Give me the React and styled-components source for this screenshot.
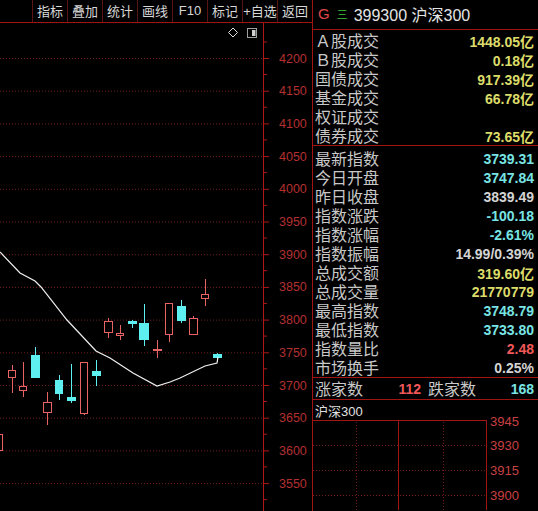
import React from 'react'
import styled, { createGlobalStyle } from 'styled-components'

const GlobalStyle = createGlobalStyle`
    html, body {
        margin: 0;
        padding: 0;
        background: #000;
    }
    * {
        box-sizing: border-box;
    }
`

const FONT = '"Liberation Sans", "Noto Sans CJK SC", sans-serif'
const RED_LINE = '#a01414'

const tools = ['指标', '叠加', '统计', '画线', 'F10', '标记', '+自选', '返回']

const volumeRows = [
    { label: 'Ａ股成交', value: '1448.05亿', tone: 'yellow' },
    { label: 'Ｂ股成交', value: '0.18亿', tone: 'yellow' },
    { label: '国债成交', value: '917.39亿', tone: 'yellow' },
    { label: '基金成交', value: '66.78亿', tone: 'yellow' },
    { label: '权证成交', value: '', tone: 'yellow' },
    { label: '债券成交', value: '73.65亿', tone: 'yellow' },
]

const indexRows = [
    { label: '最新指数', value: '3739.31', tone: 'cyan' },
    { label: '今日开盘', value: '3747.84', tone: 'cyan' },
    { label: '昨日收盘', value: '3839.49', tone: 'white' },
    { label: '指数涨跌', value: '-100.18', tone: 'cyan' },
    { label: '指数涨幅', value: '-2.61%', tone: 'cyan' },
    { label: '指数振幅', value: '14.99/0.39%', tone: 'white' },
    { label: '总成交额', value: '319.60亿', tone: 'yellow' },
    { label: '总成交量', value: '21770779', tone: 'yellow' },
    { label: '最高指数', value: '3748.79', tone: 'cyan' },
    { label: '最低指数', value: '3733.80', tone: 'cyan' },
    { label: '指数量比', value: '2.48', tone: 'red' },
    { label: '市场换手', value: '0.25%', tone: 'white' },
]

const tones = {
    yellow: '#dcdc6a',
    cyan: '#78e4e4',
    white: '#d4d4d4',
    red: '#f05858',
}

// x, width, body top, body bottom, wick top, wick bottom, up (red) / down (cyan), filled
const candles = [
    [-5, 8, 434, 451, 430, 455, true],
    [8, 8, 370, 378, 365, 393, true],
    [19, 8, 386, 391, 362, 397, true],
    [31, 9, 355, 378, 347, 378, false],
    [43, 9, 402, 413, 392, 425, true],
    [55, 8, 380, 394, 375, 400, false],
    [67, 9, 397, 401, 364, 403, false],
    [80, 8, 362, 414, 362, 415, true],
    [92, 9, 371, 376, 360, 386, false],
    [104, 9, 321, 333, 318, 338, true],
    [116, 8, 333, 336, 325, 340, true],
    [128, 9, 321, 324, 320, 328, false],
    [139, 10, 323, 340, 304, 346, false],
    [153, 9, 349, 351, 340, 358, true, true],
    [165, 8, 303, 335, 303, 342, true],
    [177, 9, 306, 321, 300, 323, false],
    [189, 9, 318, 335, 316, 335, true],
    [201, 8, 294, 299, 279, 306, true],
    [213, 9, 354, 358, 353, 362, false],
]

const maLine = '0,252 20,273 35,281 41,287 67,320 96,351 110,358 133,373 157,386 170,382 180,378 205,366 217,363 218,357'

const priceLevels = [4200, 4150, 4100, 4050, 4000, 3950, 3900, 3850, 3800, 3750, 3700, 3650, 3600, 3550]
const levelY = (i) => 58 + i * 32.7

function Candle({ c }) {
    const [x, w, bt, bb, wt, wb, up, filled] = c
    const mid = x + Math.floor(w / 2)
    const color = up ? '#e86464' : '#5ef0f0'
    return (
        <g>
            <line x1={mid + 0.5} x2={mid + 0.5} y1={wt} y2={bt} stroke={color} />
            <line x1={mid + 0.5} x2={mid + 0.5} y1={bb} y2={wb} stroke={color} />
            {up && !filled ? (
                <rect x={x + 0.5} y={bt + 0.5} width={w - 1} height={Math.max(bb - bt - 1, 1)} fill="#000" stroke={color} />
            ) : (
                <rect x={x} y={bt} width={w} height={Math.max(bb - bt, 2)} fill={color} />
            )}
        </g>
    )
}

function KChart() {
    return (
        <ChartSvg viewBox="0 23 312 488" width="312" height="488">
            {priceLevels.map((p, i) => (
                <line key={p} x1="0" x2="262" y1={levelY(i) + 0.5} y2={levelY(i) + 0.5}
                    stroke="#6e1c1c" strokeDasharray="1 2" />
            ))}
            <line x1="263.5" x2="263.5" y1="23" y2="511" stroke="#b01818" />
            {priceLevels.map((p, i) => (
                <g key={'t' + p}>
                    <line x1="264" x2="269" y1={levelY(i) + 0.5} y2={levelY(i) + 0.5} stroke="#b01818" />
                    <line x1="264" x2="267" y1={levelY(i) + 16.5} y2={levelY(i) + 16.5} stroke="#b01818" />
                    <text x="279" y={levelY(i) + 4.5} fill="#b43030" fontSize="12.5" fontFamily={FONT}>{p}</text>
                </g>
            ))}
            <line x1="264" x2="267" y1={levelY(0) - 16} y2={levelY(0) - 16} stroke="#b01818" />

            {candles.map((c, i) => <Candle key={i} c={c} />)}
            <polyline points={maLine} fill="none" stroke="#f0f0f0" strokeWidth="1.2" />

            {/* small toggle icons over the chart */}
            <path d="M233 28 L237.5 32.5 L233 37 L228.5 32.5 Z" fill="none" stroke="#e0e0e0" />
            <rect x="247.5" y="28.5" width="9" height="9" fill="none" stroke="#a0a0a0" />
            <rect x="252" y="30" width="3.5" height="6" fill="#d0d0d0" />
        </ChartSvg>
    )
}

function MiniChart() {
    const ys = [446, 471, 496]
    const labels = [[3945, 422], [3930, 446], [3915, 471], [3900, 496]]
    return (
        <MiniSvg viewBox="313 414 225 97" width="225" height="97">
            <line x1="313" x2="487" y1="421.5" y2="421.5" stroke={RED_LINE} />
            <line x1="487.5" x2="487.5" y1="421" y2="511" stroke={RED_LINE} />
            <line x1="399.5" x2="399.5" y1="421" y2="511" stroke={RED_LINE} />
            {ys.map((y) => (
                <line key={y} x1="314" x2="487" y1={y + 0.5} y2={y + 0.5} stroke="#6e1c1c" strokeDasharray="1 2" />
            ))}
            {[357, 444].map((x) => (
                <line key={x} x1={x + 0.5} x2={x + 0.5} y1="423" y2="511" stroke="#6e1c1c" strokeDasharray="1 2" />
            ))}
            {labels.map(([p, y]) => (
                <text key={p} x="491" y={y + 5} fill="#c84040" fontSize="13" fontFamily={FONT}>{p}</text>
            ))}
        </MiniSvg>
    )
}

export default function App() {
    return (
        <>
            <GlobalStyle />
            <Screen>
                <LeftPane>
                    <Toolbar>
                        {tools.map((t) => <Tool key={t}>{t}</Tool>)}
                    </Toolbar>
                    <KChart />
                </LeftPane>
                <InfoPane>
                    <Header>
                        <Mark>G</Mark>
                        <Menu>三</Menu>
                        <Title>399300 沪深300</Title>
                    </Header>
                    <Group $top={1}>
                        {volumeRows.map((r) => (
                            <Row key={r.label}>
                                <Label>{r.label}</Label>
                                <Value $tone={r.tone}>{r.value}</Value>
                            </Row>
                        ))}
                    </Group>
                    <Group $top={3}>
                        {indexRows.map((r) => (
                            <Row key={r.label}>
                                <Label>{r.label}</Label>
                                <Value $tone={r.tone}>{r.value}</Value>
                            </Row>
                        ))}
                    </Group>
                    <Counts>
                        <Label>涨家数</Label>
                        <Value $tone="red">112</Value>
                        <Label $gap>跌家数</Label>
                        <Value $tone="cyan">168</Value>
                    </Counts>
                    <MiniTitle>沪深300</MiniTitle>
                    <MiniChart />
                </InfoPane>
            </Screen>
        </>
    )
}

const Screen = styled.div`
    width: 538px;
    height: 511px;
    background: #000;
    display: flex;
    overflow: hidden;
    font-family: ${FONT};
`
const LeftPane = styled.div`
    width: 312px;
    display: flex;
    flex-direction: column;
`
const Toolbar = styled.div`
    height: 23px;
    display: flex;
    padding-left: 32px;
    border-bottom: 1px solid ${RED_LINE};
`
const Tool = styled.div`
    flex: 1;
    display: flex;
    align-items: center;
    justify-content: center;
    border-left: 1px solid #5a1414;
    color: #d8d8d8;
    font-size: 13px;
    padding-bottom: 1px;
`
const ChartSvg = styled.svg`
    display: block;
`
const InfoPane = styled.div`
    flex: 1;
    display: flex;
    flex-direction: column;
    border-left: 1px solid ${RED_LINE};
`
const Header = styled.div`
    height: 30px;
    display: flex;
    align-items: center;
    gap: 7px;
    padding: 0 0 2px 5px;
    border-bottom: 1px solid ${RED_LINE};
`
const Mark = styled.span`
    color: #e04848;
    font-size: 15px;
`
const Menu = styled.span`
    color: #3cc03c;
    font-size: 11px;
    font-family: "Noto Sans CJK SC", sans-serif;
`
const Title = styled.span`
    color: #e4e4e4;
    font-size: 16px;
    margin-left: -1px;
`
const Group = styled.div`
    padding-top: ${(p) => p.$top}px;
    border-bottom: 1px solid ${RED_LINE};
`
const Row = styled.div`
    height: 19px;
    display: flex;
    align-items: center;
    justify-content: space-between;
    padding: 0 4px 0 2px;
`
const Label = styled.span`
    color: #c8c8c8;
    font-size: 16px;
    font-family: "Noto Sans CJK SC", sans-serif;
    line-height: 19px;
    white-space: nowrap;
    margin-left: ${(p) => (p.$gap ? '7px' : '0')};
`
const Value = styled.span`
    color: ${(p) => tones[p.$tone]};
    font-size: 14px;
    font-weight: bold;
    text-align: right;
    white-space: nowrap;
`
const Counts = styled.div`
    height: 22px;
    display: grid;
    grid-template-columns: 48px 58px 55px 58px;
    align-items: center;
    padding: 0 0 0 2px;
    border-bottom: 1px solid ${RED_LINE};
`
const MiniTitle = styled.div`
    height: 20px;
    display: flex;
    align-items: center;
    padding-left: 2px;
    color: #e0e0e0;
    font-size: 13px;
`
const MiniSvg = styled.svg`
    display: block;
    margin-top: -7px;
    margin-left: -1px;
`
